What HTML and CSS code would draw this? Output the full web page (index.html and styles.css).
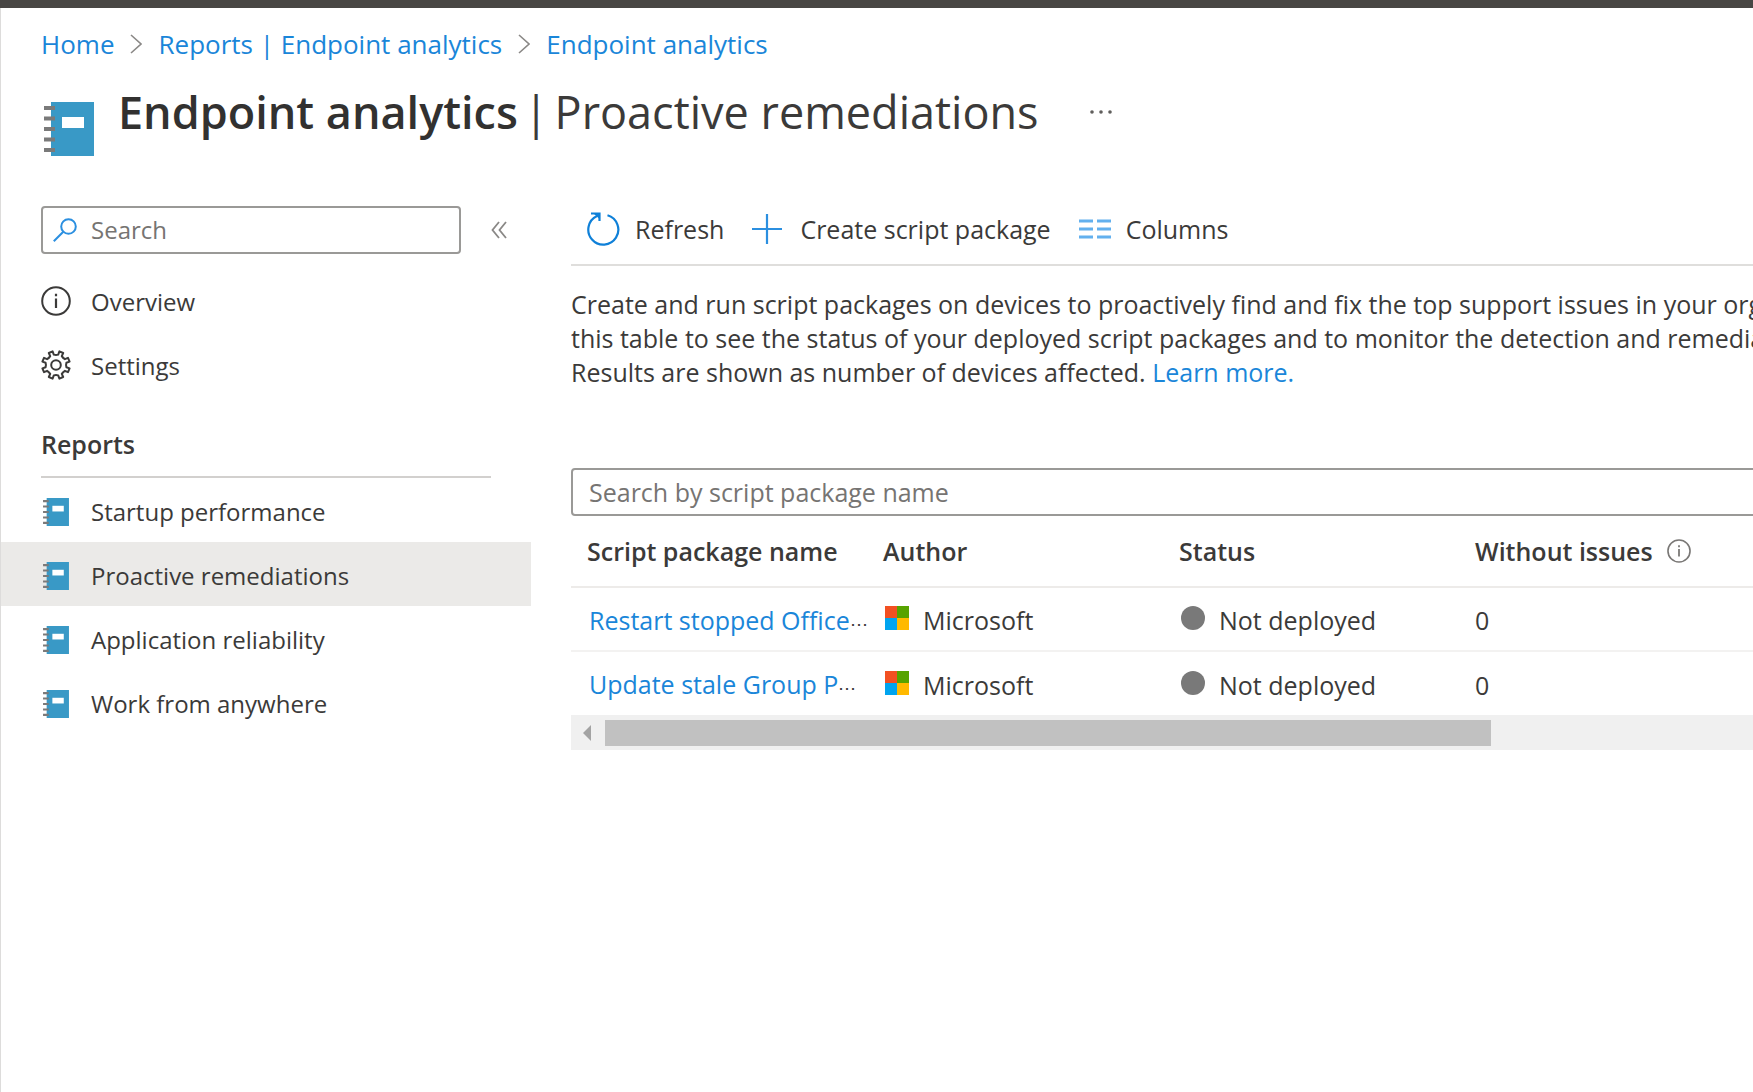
FILE: index.html
```html
<!DOCTYPE html>
<html lang="en">
<head>
<meta charset="utf-8">
<title>Endpoint analytics | Proactive remediations</title>
<link rel="stylesheet" href="styles.css">
</head>
<body>
<svg class="defs" aria-hidden="true">
  <symbol id="book" viewBox="0 0 50 54">
    <path fill="#3999c6" d="M7 0h43v54H7z"/>
    <path fill="#fff" d="M18 15h22v11H18z"/>
    <path stroke="#7a7a7a" stroke-width="4" d="M0 6h11M0 16.500h11M0 27h11M0 37.500h11M0 48h11"/>
  </symbol>
  <symbol id="crumb" viewBox="0 0 12 20">
    <path fill="none" stroke="#8a8886" stroke-width="1.600" d="M1 1l10 9-10 9"/>
  </symbol>
  <symbol id="mslogo" viewBox="0 0 24 24">
    <path fill="#f25022" d="M0 0h12v12H0z"/><path fill="#57a300" d="M12 0h12v12H12z"/>
    <path fill="#00a4ef" d="M0 12h12v12H0z"/><path fill="#ffb900" d="M12 12h12v12H12z"/>
  </symbol>
  <symbol id="info" viewBox="0 0 30 30">
    <circle cx="15" cy="15" r="13.800" fill="none" stroke="currentColor" stroke-width="2"/>
    <path stroke="currentColor" stroke-width="2.200" d="M15 12.500V22M15 7.800v2.400"/>
  </symbol>
</svg>
<div class="topbar"></div>
<div class="blade">
  <nav class="crumbs" aria-label="Breadcrumb">
    <a href="#">Home</a>
    <svg class="sep"><use href="#crumb"/></svg>
    <a href="#">Reports | Endpoint analytics</a>
    <svg class="sep"><use href="#crumb"/></svg>
    <a href="#">Endpoint analytics</a>
  </nav>
  <header class="head">
    <svg class="head-icon"><use href="#book"/></svg>
    <h1><b>Endpoint analytics</b> <span>|</span> <span>Proactive remediations</span></h1>
    <button class="more" aria-label="More actions">
      <svg width="24" height="4" viewBox="0 0 24 4" fill="#605e5c"><circle cx="3" cy="2" r="1.800"/><circle cx="12" cy="2" r="1.800"/><circle cx="21" cy="2" r="1.800"/></svg>
    </button>
  </header>
  <div class="body">
    <aside class="side">
      <div class="side-search">
        <div class="field">
          <svg width="24" height="24" viewBox="0 0 24 24" fill="none" stroke="#2b8fe0" stroke-width="2"><circle cx="15.500" cy="8.500" r="7.300"/><path d="M10.300 13.700L.8 23.200"/></svg>
          <input type="text" placeholder="Search" aria-label="Search">
        </div>
        <button class="collapse" aria-label="Collapse menu">
          <svg width="16" height="18" viewBox="0 0 16 18" fill="none" stroke="#8a8886" stroke-width="1.800"><path d="M8 1L1.500 9 8 17M15 1L8.500 9l6.500 8"/></svg>
        </button>
      </div>
      <nav aria-label="Menu">
        <a class="item" href="#"><svg class="round"><use href="#info"/></svg>Overview</a>
        <a class="item" href="#">
          <svg class="round" viewBox="0 0 30 30" fill="none" stroke="currentColor" stroke-width="2" stroke-linejoin="round"><circle cx="15" cy="15" r="4.800"/><path d="M12.800 4.600L11.600 1.400L7.800 3L9.200 6.100Q8 8 6.100 9.200L3 7.800L1.400 11.600L4.600 12.800Q5.300 15 4.600 17.200L1.400 18.400L3 22.200L6.100 20.800Q8 22 9.200 23.900L7.800 27L11.600 28.600L12.800 25.400Q15 24.700 17.200 25.400L18.400 28.600L22.200 27L20.800 23.900Q22 22 23.900 20.800L27 22.200L28.600 18.400L25.400 17.200Q24.700 15 25.400 12.800L28.600 11.600L27 7.800L23.900 9.200Q22 8 20.800 6.100L22.200 3L18.400 1.400L17.200 4.600Q15 5.300 12.800 4.600Z"/></svg>
          Settings</a>
        <h2>Reports</h2>
        <a class="item" href="#"><svg class="book"><use href="#book"/></svg>Startup performance</a>
        <a class="item current" href="#" aria-current="page"><svg class="book"><use href="#book"/></svg>Proactive remediations</a>
        <a class="item" href="#"><svg class="book"><use href="#book"/></svg>Application reliability</a>
        <a class="item" href="#"><svg class="book"><use href="#book"/></svg>Work from anywhere</a>
      </nav>
    </aside>
    <main class="main">
      <div class="wide">
        <div class="tools">
          <button class="t-refresh">
            <svg width="34" height="34" viewBox="0 0 34 34" fill="none" stroke="#0f80d8" stroke-width="2.200"><path d="M21.500 3.200A15 15 0 1 1 11 4"/><path d="M5 1.500h8.500V9"/><path d="M7.500 1.500h6V7z" fill="#0f80d8" stroke="none"/></svg>
            Refresh</button>
          <button class="t-create">
            <svg width="30" height="32" viewBox="0 0 30 32" stroke="#2b8fe0" stroke-width="2.200"><path d="M15 1v30M0 16h30"/></svg>
            Create script package</button>
          <button class="t-columns">
            <svg width="32" height="22" viewBox="0 0 32 22" stroke="#62b0ee" stroke-width="3.200"><path d="M0 3h14M18 3h14M0 11h14M18 11h14M0 19h14M18 19h14"/></svg>
            Columns</button>
        </div>
        <p class="intro">Create and run script packages on devices to proactively find and fix the top support issues in your organization. Use<br>this table to see the status of your deployed script packages and to monitor the detection and remediation status.<br>Results are shown as number of devices affected. <a href="#">Learn more.</a></p>
        <input class="filter" type="text" placeholder="Search by script package name" aria-label="Search by script package name">
        <table>
          <thead>
            <tr><th>Script package name</th><th>Author</th><th>Status</th><th><span class="cell">Without issues <svg class="hint"><use href="#info"/></svg></span></th></tr>
          </thead>
          <tbody>
            <tr>
              <td class="name"><a href="#">Restart stopped Office</a><span class="cut">⋯</span></td>
              <td><span class="cell"><svg class="mark"><use href="#mslogo"/></svg>Microsoft</span></td>
              <td><span class="cell"><i class="dot"></i>Not deployed</span></td>
              <td>0</td>
            </tr>
            <tr>
              <td class="name"><a href="#">Update stale Group P</a><span class="cut">⋯</span></td>
              <td><span class="cell"><svg class="mark"><use href="#mslogo"/></svg>Microsoft</span></td>
              <td><span class="cell"><i class="dot"></i>Not deployed</span></td>
              <td>0</td>
            </tr>
          </tbody>
        </table>
        <div class="scroll">
          <svg width="8" height="16" viewBox="0 0 8 16"><path fill="#a3a3a3" d="M8 0v16L0 8z"/></svg>
          <div class="thumb"></div>
        </div>
      </div>
    </main>
  </div>
</div>
</body>
</html>
```
FILE: styles.css
```css
* { box-sizing: border-box; }

body {
  margin: 0;
  background: #fff;
  color: #3b3a39;
  font-family: "Open Sans", "Noto Sans", sans-serif;
  font-size: 25px;
  line-height: 34px;
  overflow-x: hidden;
}

a { color: #1a86d9; text-decoration: none; }
svg { display: block; flex: none; }
button {
  display: flex;
  align-items: center;
  padding: 0;
  border: 0;
  background: none;
  color: inherit;
  font: inherit;
  white-space: nowrap;
}
input { font: inherit; color: inherit; }
input::placeholder { color: #767472; opacity: 1; }

.defs { position: absolute; width: 0; height: 0; }
.topbar { height: 8px; background: #484644; }
.blade { min-height: calc(100vh - 8px); border-left: 1px solid #dddcdb; }

.crumbs {
  display: flex;
  align-items: center;
  gap: 16px;
  padding: 19px 40px 0;
  font-size: 26px;
  white-space: nowrap;
}
.sep { width: 12px; height: 20px; }

.head {
  display: flex;
  align-items: center;
  padding: 4px 43px 0;
  height: 97px;
}
.head-icon { width: 50px; height: 54px; margin-top: 34px; }
h1 {
  display: flex;
  gap: 6px;
  margin: 0 50px 0 24px;
  font-size: 45px;
  line-height: 64px;
  font-weight: 400;
  white-space: nowrap;
}
h1 b { font-weight: 600; color: #323130; }

.body { display: grid; grid-template-columns: 530px minmax(0, 1fr); column-gap: 40px; padding-top: 48px; }

.side { font-size: 24px; }
.side-search { display: flex; align-items: center; gap: 30px; padding: 0 24px 0 40px; margin-bottom: 14px; }
.field {
  display: flex;
  align-items: center;
  gap: 14px;
  flex: 1;
  height: 48px;
  padding: 0 10px;
  border: 2px solid #9a9997;
  border-radius: 4px;
}
.field input { flex: 1; min-width: 0; padding: 0; border: 0; outline: 0; background: none; }

.item {
  display: flex;
  align-items: center;
  height: 64px;
  padding: 4px 40px 0;
  color: inherit;
  white-space: nowrap;
}
.item.current { background: #ebeae8; }
.round { width: 30px; height: 30px; margin: 0 20px 2px 0; }
.book { width: 26px; height: 28px; margin: 0 22px 0 2px; }
h2 {
  margin: 0 40px;
  padding: 31px 0 15px;
  border-bottom: 2px solid #d2d0ce;
  font-size: 25px;
  line-height: 34px;
  font-weight: 600;
}

.main { overflow: hidden; }
.wide { width: calc(100% + 60px); }
.tools { display: flex; height: 60px; padding: 0 15px 12px; border-bottom: 2px solid #dfdedc; }
.t-refresh { gap: 15px; margin-right: 28px; }
.t-create { gap: 18px; margin-right: 28px; }
.t-columns { gap: 15px; }

.intro { margin: 21px 0 79px; white-space: nowrap; }
.filter {
  display: block;
  width: 100%;
  height: 48px;
  padding: 0 16px;
  border: 2px solid #9a9997;
  border-radius: 4px;
}

table { width: 100%; border-collapse: collapse; table-layout: fixed; }
th, td { padding: 0 0 0 16px; text-align: left; white-space: nowrap; }
th:nth-child(-n+3) { width: 296px; }
th { height: 71px; font-weight: 600; border-bottom: 2px solid #edebe9; }
td { height: 64px; padding-top: 2px; border-bottom: 2px solid #f3f2f1; }
tbody tr:last-child td { border-bottom: 0; }
.name { padding: 4px 0 0 18px; }
.cut { font-size: 18px; }
.cell { display: flex; align-items: center; }
.mark, .dot { width: 24px; height: 24px; margin: 0 14px 4px 2px; }
.dot { flex: none; border-radius: 50%; background: #797979; }
.hint { width: 24px; height: 24px; margin-left: 14px; color: #797775; }

.scroll { display: flex; align-items: center; gap: 14px; height: 35px; padding-left: 12px; background: #f0f0f0; }
.thumb { width: 72%; height: 26px; background: #c1c1c1; }
```
